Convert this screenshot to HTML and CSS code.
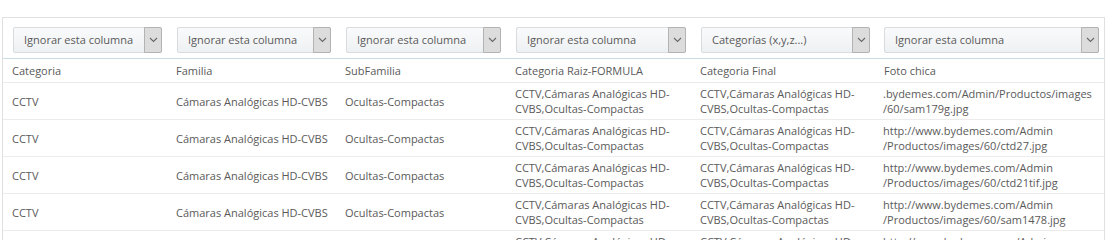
FILE: index.html
```html
<!DOCTYPE html>
<html lang="es">
<head>
<meta charset="utf-8">
<link rel="stylesheet" href="styles.css">
</head>
<body>
<div class="panel">
<table class="grid">
<colgroup>
<col style="width:164px"><col style="width:169px"><col style="width:170px"><col style="width:185px"><col style="width:184px"><col>
</colgroup>
<thead>
<tr class="sel-row">
<th><div class="sel"><span class="sel-text">Ignorar esta columna</span><span class="sel-arrow"><svg width="9" height="6" viewBox="0 0 9 6"><path d="M1 1l3.5 3.5L8 1" fill="none" stroke="#666" stroke-width="1.1"/></svg></span></div></th>
<th><div class="sel"><span class="sel-text">Ignorar esta columna</span><span class="sel-arrow"><svg width="9" height="6" viewBox="0 0 9 6"><path d="M1 1l3.5 3.5L8 1" fill="none" stroke="#666" stroke-width="1.1"/></svg></span></div></th>
<th><div class="sel"><span class="sel-text">Ignorar esta columna</span><span class="sel-arrow"><svg width="9" height="6" viewBox="0 0 9 6"><path d="M1 1l3.5 3.5L8 1" fill="none" stroke="#666" stroke-width="1.1"/></svg></span></div></th>
<th><div class="sel"><span class="sel-text">Ignorar esta columna</span><span class="sel-arrow"><svg width="9" height="6" viewBox="0 0 9 6"><path d="M1 1l3.5 3.5L8 1" fill="none" stroke="#666" stroke-width="1.1"/></svg></span></div></th>
<th><div class="sel"><span class="sel-text">Categorías (x,y,z...)</span><span class="sel-arrow"><svg width="9" height="6" viewBox="0 0 9 6"><path d="M1 1l3.5 3.5L8 1" fill="none" stroke="#666" stroke-width="1.1"/></svg></span></div></th>
<th><div class="sel"><span class="sel-text">Ignorar esta columna</span><span class="sel-arrow"><svg width="9" height="6" viewBox="0 0 9 6"><path d="M1 1l3.5 3.5L8 1" fill="none" stroke="#666" stroke-width="1.1"/></svg></span></div></th>
</tr>
<tr class="head-row">
<th>Categoria</th><th>Familia</th><th>SubFamilia</th><th>Categoria Raiz-FORMULA</th><th>Categoria Final</th><th>Foto chica</th>
</tr>
</thead>
<tbody>
<tr><td>CCTV</td><td>Cámaras Analógicas HD-CVBS</td><td>Ocultas-Compactas</td><td>CCTV,Cámaras Analógicas HD-<br>CVBS,Ocultas-Compactas</td><td>CCTV,Cámaras Analógicas HD-<br>CVBS,Ocultas-Compactas</td><td>.bydemes.com/Admin/Productos/images<br>/60/sam179g.jpg</td></tr>
<tr><td>CCTV</td><td>Cámaras Analógicas HD-CVBS</td><td>Ocultas-Compactas</td><td>CCTV,Cámaras Analógicas HD-<br>CVBS,Ocultas-Compactas</td><td>CCTV,Cámaras Analógicas HD-<br>CVBS,Ocultas-Compactas</td><td>http://www.bydemes.com/Admin<br>/Productos/images/60/ctd27.jpg</td></tr>
<tr><td>CCTV</td><td>Cámaras Analógicas HD-CVBS</td><td>Ocultas-Compactas</td><td>CCTV,Cámaras Analógicas HD-<br>CVBS,Ocultas-Compactas</td><td>CCTV,Cámaras Analógicas HD-<br>CVBS,Ocultas-Compactas</td><td>http://www.bydemes.com/Admin<br>/Productos/images/60/ctd21tif.jpg</td></tr>
<tr><td>CCTV</td><td>Cámaras Analógicas HD-CVBS</td><td>Ocultas-Compactas</td><td>CCTV,Cámaras Analógicas HD-<br>CVBS,Ocultas-Compactas</td><td>CCTV,Cámaras Analógicas HD-<br>CVBS,Ocultas-Compactas</td><td>http://www.bydemes.com/Admin<br>/Productos/images/60/sam1478.jpg</td></tr>
<tr><td>CCTV</td><td>Cámaras Analógicas HD-CVBS</td><td>Ocultas-Compactas</td><td>CCTV,Cámaras Analógicas HD-<br>CVBS,Ocultas-Compactas</td><td>CCTV,Cámaras Analógicas HD-<br>CVBS,Ocultas-Compactas</td><td>http://www.bydemes.com/Admin<br>/Productos/images/60/sam1479.jpg</td></tr>
</tbody>
</table>
</div>
</body>
</html>
```
FILE: styles.css
```css
html, body {
  margin: 0;
  padding: 0;
  background: #fff;
  overflow: hidden;
}
body {
  font-family: "Open Sans", "Liberation Sans", sans-serif;
  font-size: 11px;
  color: #5a5a5a;
}
.panel {
  margin: 17px 0 0 2px;
  width: 1101px;
  border: 1px solid #e0e0e0;
  border-bottom: none;
}
.grid {
  width: 100%;
  border-collapse: collapse;
  table-layout: fixed;
}
.grid th {
  font-weight: normal;
  text-align: left;
}
.sel-row th {
  padding: 9px 5px 5px 10px;
  border-bottom: 1px solid #cadde3;
}
.sel-row th:last-child {
  padding-left: 9px;
}
.sel {
  display: flex;
  height: 26px;
  box-sizing: border-box;
  border: 1px solid #d8dcde;
  border-radius: 2px;
  background: linear-gradient(#f9fafb, #eef1f3);
  align-items: stretch;
}
.sel-text {
  flex: 1;
  padding-left: 10px;
  line-height: 24px;
  white-space: nowrap;
  overflow: hidden;
}
.sel-arrow {
  width: 16px;
  margin: -1px -1px -1px 0;
  border: 1px solid #b3b3b3;
  border-radius: 0 2px 2px 0;
  background: #dcdcdc;
  display: flex;
  align-items: center;
  justify-content: center;
}
.head-row th {
  height: 23px;
  padding: 0 9px;
  border-bottom: 1px solid #ececec;
  vertical-align: middle;
}
.grid td {
  height: 36px;
  padding: 0 9px;
  border-bottom: 1px solid #ececec;
  vertical-align: middle;
  line-height: 15px;
  white-space: nowrap;
  overflow: hidden;
}
.grid td:last-child {
  padding-left: 8px;
}
```
